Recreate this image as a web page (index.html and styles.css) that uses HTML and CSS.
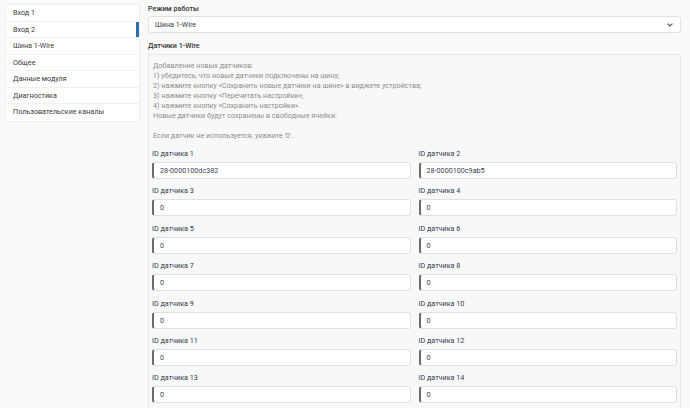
FILE: index.html
```html
<!DOCTYPE html>
<html lang="ru">
<head>
<meta charset="utf-8">
<title>Настройки</title>
<link rel="stylesheet" href="styles.css">
</head>
<body>
<div class="layout">
  <nav class="sidebar">
    <div class="nav-item">Вход 1</div>
    <div class="nav-item active">Вход 2</div>
    <div class="nav-item">Шина 1-Wire</div>
    <div class="nav-item">Общее</div>
    <div class="nav-item">Данные модуля</div>
    <div class="nav-item">Диагностика</div>
    <div class="nav-item">Пользовательские каналы</div>
  </nav>
  <main class="main">
    <div class="section-label">Режим работы</div>
    <div class="select">
      <span>Шина 1-Wire</span>
      <svg class="chevron" width="6" height="4" viewBox="0 0 6 4"><path d="M0.6 0.6 L3 3 L5.4 0.6" fill="none" stroke="#555" stroke-width="1.1"/></svg>
    </div>
    <div class="section-label second">Датчики 1-Wire</div>
    <div class="panel">
      <div class="help">
        <div>Добавление новых датчиков:</div>
        <div>1) убедитесь, что новые датчики подключены на шину;</div>
        <div>2) нажмите кнопку «Сохранить новые датчики на шине» в виджете устройства;</div>
        <div>3) нажмите кнопку «Перечитать настройки»;</div>
        <div>4) нажмите кнопку «Сохранить настройки».</div>
        <div>Новые датчики будут сохранены в свободные ячейки.</div>
        <div>&nbsp;</div>
        <div>Если датчик не используется, укажите '0'.</div>
      </div>
      <div class="grid">
        <div class="field"><div class="field-label">ID датчика 1</div><div class="input">28-0000100dc382</div></div>
        <div class="field"><div class="field-label">ID датчика 2</div><div class="input">28-0000100c9ab5</div></div>
        <div class="field"><div class="field-label">ID датчика 3</div><div class="input">0</div></div>
        <div class="field"><div class="field-label">ID датчика 4</div><div class="input">0</div></div>
        <div class="field"><div class="field-label">ID датчика 5</div><div class="input">0</div></div>
        <div class="field"><div class="field-label">ID датчика 6</div><div class="input">0</div></div>
        <div class="field"><div class="field-label">ID датчика 7</div><div class="input">0</div></div>
        <div class="field"><div class="field-label">ID датчика 8</div><div class="input">0</div></div>
        <div class="field"><div class="field-label">ID датчика 9</div><div class="input">0</div></div>
        <div class="field"><div class="field-label">ID датчика 10</div><div class="input">0</div></div>
        <div class="field"><div class="field-label">ID датчика 11</div><div class="input">0</div></div>
        <div class="field"><div class="field-label">ID датчика 12</div><div class="input">0</div></div>
        <div class="field"><div class="field-label">ID датчика 13</div><div class="input">0</div></div>
        <div class="field"><div class="field-label">ID датчика 14</div><div class="input">0</div></div>
      </div>
    </div>
  </main>
</div>
</body>
</html>
```

FILE: styles.css
```css
html, body {
  margin: 0;
  padding: 0;
  background: #f9f9f9;
  font-family: Roboto, "Noto Sans", sans-serif;
  font-size: 7.2px;
  color: #333;
  overflow: hidden;
  height: 408px;
}

.layout {
  display: flex;
  align-items: flex-start;
  gap: 8px;
  padding: 4px 9px 0 5px;
}

.sidebar {
  width: 135px;
  flex: none;
  background: #fff;
  border: 1px solid #eceef0;
  border-radius: 2px;
  box-sizing: border-box;
}

.nav-item {
  position: relative;
  height: 16.5px;
  line-height: 16px;
  padding-left: 7px;
  color: #3a3a3a;
  border-bottom: 1px solid #eef0f2;
  box-sizing: border-box;
}

.nav-item:last-child {
  border-bottom: none;
}

.nav-item.active::after {
  content: "";
  position: absolute;
  right: 0;
  top: 0;
  bottom: 0;
  width: 3px;
  background: #2f6da6;
}

.main {
  flex: 1;
  min-width: 0;
}

.section-label {
  font-weight: 500;
  color: #333;
  line-height: 10px;
  height: 10px;
  margin-bottom: 2px;
}

.section-label.second {
  margin-top: 8px;
  margin-bottom: 3px;
}

.select {
  height: 17px;
  box-sizing: border-box;
  background: #fff;
  border: 1px solid #dde2e7;
  border-radius: 3px;
  display: flex;
  align-items: center;
  justify-content: space-between;
  padding: 0 7px 0 6px;
  color: #3a3a3a;
}

.chevron {
  display: block;
}

.panel {
  border: 1px solid #e3e6ea;
  border-radius: 2px;
  background: #f8f8f8;
  padding: 6px 3px 8px;
  min-height: 400px;
}

.help {
  color: #8d8d8d;
  line-height: 10px;
  padding-left: 1px;
}

.grid {
  display: grid;
  grid-template-columns: 1fr 1fr;
  column-gap: 8px;
  row-gap: 6.4px;
  margin-top: 7px;
}

.field-label {
  line-height: 11px;
  height: 11px;
  color: #2f3d4d;
  margin-bottom: 3px;
}

.input {
  height: 17px;
  box-sizing: border-box;
  background: #fff;
  border: 1px solid #dde2e7;
  border-left: 2px solid #6a6a6a;
  border-radius: 3px;
  line-height: 15px;
  padding-left: 6px;
  color: #3a4150;
}
```
